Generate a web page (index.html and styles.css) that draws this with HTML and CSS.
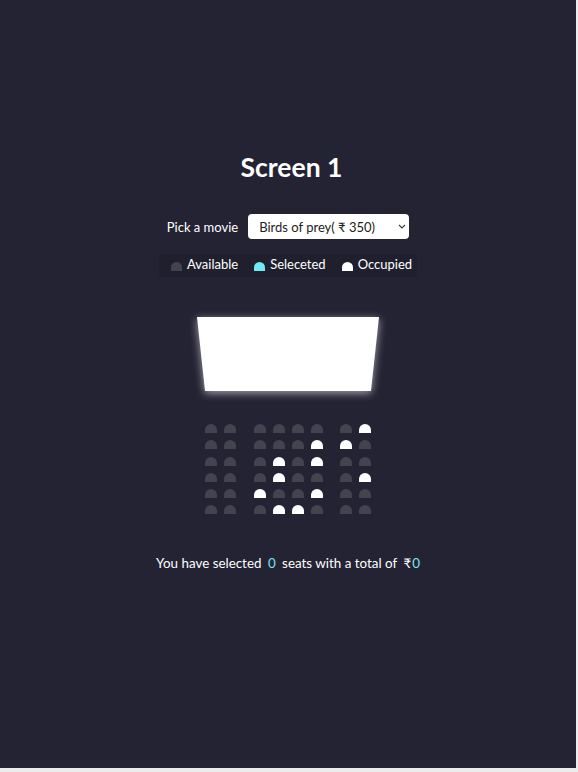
FILE: index.html
```html
<!DOCTYPE html>
<html lang="en">
<head>
<meta charset="UTF-8">
<title>Movie Seat Booking</title>
<link rel="stylesheet" href="styles.css">
</head>
<body>
<div class="page">
  <h1 class="title">Screen 1</h1>
  <div class="movie-row">
    <label class="movie-label" for="movie">Pick a movie</label>
    <div class="select-wrap">
      <select id="movie" class="movie-select">
        <option>Birds of prey( ₹ 350)</option>
      </select>
      <svg class="chevron" width="8" height="5" viewBox="0 0 8 5" aria-hidden="true"><path d="M1 1 L4 4 L7 1" fill="none" stroke="#3a3a3a" stroke-width="1.1"/></svg>
    </div>
  </div>
  <ul class="showcase">
    <li class="legend-item"><span class="seat legend"></span><small>Available</small></li>
    <li class="legend-item"><span class="seat legend selected"></span><small>Seleceted</small></li>
    <li class="legend-item"><span class="seat legend occupied"></span><small>Occupied</small></li>
  </ul>
  <div class="screen-wrap"><div class="screen"></div></div>
  <div class="seats">
    <div class="row"><span class="seat"></span><span class="seat"></span><span class="seat"></span><span class="seat"></span><span class="seat"></span><span class="seat"></span><span class="seat"></span><span class="seat occupied"></span></div>
    <div class="row"><span class="seat"></span><span class="seat"></span><span class="seat"></span><span class="seat"></span><span class="seat"></span><span class="seat occupied"></span><span class="seat occupied"></span><span class="seat"></span></div>
    <div class="row"><span class="seat"></span><span class="seat"></span><span class="seat"></span><span class="seat occupied"></span><span class="seat"></span><span class="seat occupied"></span><span class="seat"></span><span class="seat"></span></div>
    <div class="row"><span class="seat"></span><span class="seat"></span><span class="seat"></span><span class="seat occupied"></span><span class="seat"></span><span class="seat"></span><span class="seat"></span><span class="seat occupied"></span></div>
    <div class="row"><span class="seat"></span><span class="seat"></span><span class="seat occupied"></span><span class="seat"></span><span class="seat"></span><span class="seat occupied"></span><span class="seat"></span><span class="seat"></span></div>
    <div class="row"><span class="seat"></span><span class="seat"></span><span class="seat"></span><span class="seat occupied"></span><span class="seat occupied"></span><span class="seat"></span><span class="seat"></span><span class="seat"></span></div>
  </div>
  <p class="text">You have selected <span class="num">0</span> seats with a total of <span class="rupee">₹</span><span class="num total">0</span></p>
</div>
</body>
</html>
```

FILE: styles.css
```css
* { box-sizing: border-box; }

html {
  background: #ececec;
}

body {
  margin: 0;
  font-family: Lato, "Noto Sans", sans-serif;
  color: #fff;
}

.page {
  width: 576px;
  height: 768px;
  background: #242333;
  display: flex;
  flex-direction: column;
  align-items: center;
  padding-top: 151px;
}

.title {
  margin: 0;
  padding-left: 7px;
  font-size: 26.5px;
  line-height: 32px;
  font-weight: 700;
}

.movie-row {
  margin-top: 31px;
  display: flex;
  align-items: center;
  height: 25px;
  font-size: 13px;
}

.movie-label {
  margin-right: 10px;
}

.select-wrap {
  position: relative;
  display: flex;
}

.movie-select {
  -webkit-appearance: none;
  appearance: none;
  width: 161px;
  height: 25px;
  border: 0;
  border-radius: 4px;
  background: #fff;
  color: #222;
  font-family: Lato, "Noto Sans", sans-serif;
  font-size: 13px;
  padding: 0 16px 0 11px;
}

.chevron {
  position: absolute;
  right: 3px;
  top: 10px;
  pointer-events: none;
}

.showcase {
  margin: 15px 0 0;
  list-style: none;
  display: flex;
  align-items: center;
  gap: 16px;
  height: 23px;
  padding: 0 5px 0 12px;
  background: rgba(0, 0, 0, 0.1);
  border-radius: 2px;
}

.legend-item {
  display: flex;
  align-items: center;
  gap: 5px;
}

.legend-item small {
  font-size: 13px;
  margin-bottom: 3px;
}

.seat {
  display: block;
  width: 12px;
  height: 9px;
  background: #444451;
  border-top-left-radius: 6px 6px;
  border-top-right-radius: 6px 6px;
}

.seat.legend {
  width: 11px;
  height: 9px;
  margin-top: 1px;
}

.seat.selected { background: #6feaf6; }
.seat.occupied { background: #fff; }

.screen-wrap {
  margin-top: 40px;
  filter: drop-shadow(0 2px 4px rgba(255, 255, 255, 0.6));
}

.screen {
  width: 182px;
  height: 74px;
  background: #fff;
  clip-path: polygon(0 0, 100% 0, 95.6% 100%, 4.4% 100%);
}

.seats {
  margin-top: 33px;
  display: flex;
  flex-direction: column;
  gap: 7.3px;
}

.row {
  display: flex;
  gap: 7px;
}

.row .seat:nth-child(2) { margin-right: 10.7px; }
.row .seat:nth-last-child(2) { margin-left: 10.7px; }

.text {
  margin: 41px 0 0;
  font-size: 13.4px;
  line-height: 17px;
}

.rupee {
  margin-left: 3px;
}

.num {
  color: #6feaf6;
  margin: 0 3px;
}

.num.total {
  margin: 0 0 0 1px;
}
```
